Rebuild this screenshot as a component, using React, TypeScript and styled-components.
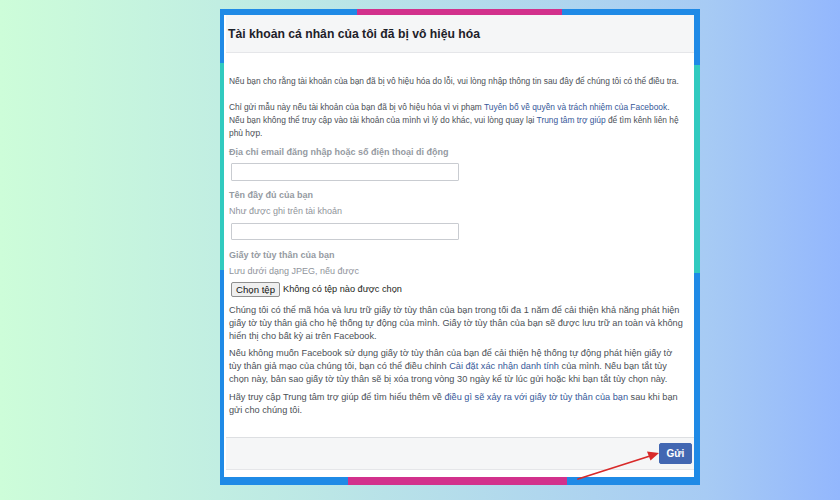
import { createGlobalStyle, styled } from "styled-components";

const GlobalStyle = createGlobalStyle`
  html, body {
    margin: 0;
    padding: 0;
  }
  body {
    width: 840px;
    height: 500px;
    overflow: hidden;
    font-family: "Liberation Sans", Arial, Helvetica, sans-serif;
  }
`;

const BLUE = "#1f8ae6";
const PINK = "#d2318c";
const TEAL = "#31cabf";

const Page = styled.div`
  width: 840px;
  height: 500px;
  box-sizing: border-box;
  padding: 9px 0 0 220px;
  background: linear-gradient(
    90deg,
    #cdfdd9 0%,
    #c1eee2 26%,
    #a7cbf4 84%,
    #93b7fd 100%
  );
`;

const Frame = styled.div`
  position: relative;
  width: 480px;
  height: 476px;
  box-sizing: border-box;
  padding: 6px 6px 8px 4px;
  background:
    linear-gradient(90deg, ${BLUE} 0 137px, ${PINK} 137px 342px, ${BLUE} 342px) top / 100% 6px no-repeat,
    linear-gradient(90deg, ${BLUE} 0 128px, ${PINK} 128px 347px, ${BLUE} 347px) bottom / 100% 8px no-repeat,
    linear-gradient(180deg, ${BLUE} 0 54px, ${TEAL} 54px 261px, ${BLUE} 261px) left / 4px 100% no-repeat,
    linear-gradient(180deg, ${BLUE} 0 56px, ${TEAL} 56px 264px, ${BLUE} 264px) right / 6px 100% no-repeat;
`;

const Card = styled.div`
  height: 100%;
  background: #fff;
  display: flex;
  flex-direction: column;
  padding-left: 2px;
  box-sizing: border-box;
`;

const Header = styled.div`
  height: 38px;
  flex: none;
  box-sizing: border-box;
  background: #f5f6f7;
  border-bottom: 1px solid #e5e6e9;
  display: flex;
  align-items: center;
  padding: 0 0 0 2px;
`;

const Title = styled.h1`
  margin: 0;
  font-size: 12.2px;
  font-weight: bold;
  color: #1d2129;
`;

const Body = styled.div`
  flex: 1;
  padding: 22px 0 0 3px;
  color: #4b4f56;
  font-size: 9.2px;
  line-height: 13px;
`;

const Para = styled.p<{ $top?: number; $small?: boolean }>`
  margin: ${(p) => p.$top ?? 0}px 0 0;
  white-space: nowrap;
  font-size: ${(p) => (p.$small ? "8.4px" : "inherit")};
`;

const Link = styled.span`
  color: #365899;
`;

const Label = styled.div<{ $top: number }>`
  margin-top: ${(p) => p.$top}px;
  font-size: 9px;
  line-height: 14px;
  font-weight: bold;
  color: #959aa2;
`;

const Hint = styled.div`
  margin-top: 2px;
  font-size: 9px;
  line-height: 14px;
  color: #90949c;
`;

const TextInput = styled.input<{ $top: number; $h: number }>`
  display: block;
  margin: ${(p) => p.$top}px 0 0 2px;
  width: 228px;
  height: ${(p) => p.$h}px;
  box-sizing: border-box;
  border: 1px solid #c9ccd1;
  border-radius: 1px;
  background: #fff;
  padding: 0 4px;
  outline: none;
`;

const FileRow = styled.div`
  margin: 4px 0 0 2px;
  display: flex;
  align-items: center;
  gap: 3px;
  font-size: 9.2px;
  color: #1c1e21;
`;

const FileButton = styled.button`
  height: 15px;
  width: 49px;
  padding: 0;
  box-sizing: border-box;
  border: 1px solid #8f8f8f;
  border-radius: 2px;
  background: #efefef;
  font-family: inherit;
  font-size: 9.6px;
  color: #111;
`;

const Footer = styled.div`
  flex: none;
  height: 33px;
  margin-bottom: 7px;
  box-sizing: border-box;
  background: #f5f6f7;
  border-top: 1px solid #dddfe2;
  border-bottom: 1px solid #e5e6e9;
  display: flex;
  align-items: center;
  justify-content: flex-end;
  padding-right: 2px;
`;

const SubmitButton = styled.button`
  width: 33px;
  height: 21px;
  padding: 0;
  border: 1px solid #4267b2;
  border-radius: 2px;
  background: #4267b2;
  color: #fff;
  font-family: inherit;
  font-size: 10px;
  font-weight: bold;
`;

const Arrow = styled.svg`
  position: absolute;
  left: 352px;
  top: 438px;
  pointer-events: none;
`;

export default function App() {
  return (
    <>
      <GlobalStyle />
      <Page>
        <Frame>
          <Card>
            <Header>
              <Title>Tài khoản cá nhân của tôi đã bị vô hiệu hóa</Title>
            </Header>
            <Body>
              <Para $small>
                Nếu bạn cho rằng tài khoản của bạn đã bị vô hiệu hóa do lỗi, vui lòng nhập thông tin sau đây để chúng tôi có thể điều tra.
              </Para>
              <Para $small $top={13}>
                Chỉ gửi mẫu này nếu tài khoản của bạn đã bị vô hiệu hóa vì vi phạm{" "}
                <Link>Tuyên bố về quyền và trách nhiệm của Facebook</Link>.
                <br />
                Nếu bạn không thể truy cập vào tài khoản của mình vì lý do khác, vui lòng quay lại{" "}
                <Link>Trung tâm trợ giúp</Link> để tìm kênh liên hệ
                <br />
                phù hợp.
              </Para>
              <Label $top={5}>Địa chỉ email đăng nhập hoặc số điện thoại di động</Label>
              <TextInput $top={4} $h={18} />
              <Label $top={7}>Tên đầy đủ của bạn</Label>
              <Hint>Như được ghi trên tài khoản</Hint>
              <TextInput $top={5} $h={17} />
              <Label $top={8}>Giấy tờ tùy thân của bạn</Label>
              <Hint>Lưu dưới dạng JPEG, nếu được</Hint>
              <FileRow>
                <FileButton type="button">Chọn tệp</FileButton>
                <span>Không có tệp nào được chọn</span>
              </FileRow>
              <Para $top={7}>
                Chúng tôi có thể mã hóa và lưu trữ giấy tờ tùy thân của bạn trong tối đa 1 năm để cải thiện khả năng phát hiện
                <br />
                giấy tờ tùy thân giả cho hệ thống tự động của mình. Giấy tờ tùy thân của bạn sẽ được lưu trữ an toàn và không
                <br />
                hiển thị cho bất kỳ ai trên Facebook.
              </Para>
              <Para $top={4}>
                Nếu không muốn Facebook sử dụng giấy tờ tùy thân của bạn để cải thiện hệ thống tự động phát hiện giấy tờ
                <br />
                tùy thân giả mạo của chúng tôi, bạn có thể điều chỉnh <Link>Cài đặt xác nhận danh tính</Link> của mình. Nếu bạn tắt tùy
                <br />
                chọn này, bản sao giấy tờ tùy thân sẽ bị xóa trong vòng 30 ngày kể từ lúc gửi hoặc khi bạn tắt tùy chọn này.
              </Para>
              <Para $top={5}>
                Hãy truy cập Trung tâm trợ giúp để tìm hiểu thêm về{" "}
                <Link>điều gì sẽ xảy ra với giấy tờ tùy thân của bạn</Link> sau khi bạn
                <br />
                gửi cho chúng tôi.
              </Para>
            </Body>
            <Footer>
              <SubmitButton type="button">Gửi</SubmitButton>
            </Footer>
          </Card>
          <Arrow width="92" height="36" viewBox="0 0 92 36">
            <line x1="6" y1="32" x2="78" y2="9" stroke="#d82a2a" strokeWidth="1.8" strokeLinecap="round" />
            <polygon points="87,6 75,4.5 78.5,13.5" fill="#d82a2a" />
          </Arrow>
        </Frame>
      </Page>
    </>
  );
}
